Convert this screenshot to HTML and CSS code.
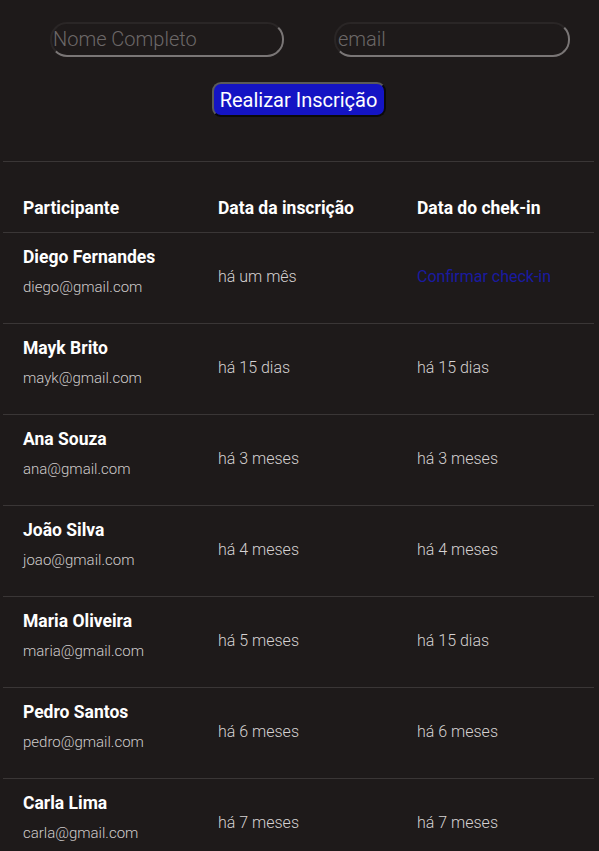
FILE: index.html
```html
<!DOCTYPE html>
<html lang="pt-BR">
<head>
<meta charset="utf-8">
<title>Inscrições</title>
<link rel="stylesheet" href="styles.css">
</head>
<body>
<main class="page">
  <form class="form">
    <div class="fields">
      <input class="field field-name" type="text" placeholder="Nome Completo">
      <input class="field field-email" type="email" placeholder="email">
    </div>
    <button class="submit" type="button">Realizar Inscrição</button>
  </form>
  <hr class="divider">
  <table class="table">
    <thead>
      <tr><th>Participante</th><th>Data da inscrição</th><th>Data do chek-in</th></tr>
    </thead>
    <tbody>
      <tr><td><strong>Diego Fernandes</strong><small>diego@gmail.com</small></td><td>há um mês</td><td><a class="checkin" href="#">Confirmar check-in</a></td></tr>
      <tr><td><strong>Mayk Brito</strong><small>mayk@gmail.com</small></td><td>há 15 dias</td><td>há 15 dias</td></tr>
      <tr><td><strong>Ana Souza</strong><small>ana@gmail.com</small></td><td>há 3 meses</td><td>há 3 meses</td></tr>
      <tr><td><strong>João Silva</strong><small>joao@gmail.com</small></td><td>há 4 meses</td><td>há 4 meses</td></tr>
      <tr><td><strong>Maria Oliveira</strong><small>maria@gmail.com</small></td><td>há 5 meses</td><td>há 15 dias</td></tr>
      <tr><td><strong>Pedro Santos</strong><small>pedro@gmail.com</small></td><td>há 6 meses</td><td>há 6 meses</td></tr>
      <tr><td><strong>Carla Lima</strong><small>carla@gmail.com</small></td><td>há 7 meses</td><td>há 7 meses</td></tr>
    </tbody>
  </table>
</main>
</body>
</html>
```
FILE: styles.css
```css
html, body {
  margin: 0;
  padding: 0;
  background: #1e1a1a;
  font-family: Roboto, "Noto Sans", sans-serif;
  color: #fff;
}
.page {
  padding: 0 5px 0 3px;
}
.form {
  display: flex;
  flex-direction: column;
  align-items: center;
  padding-top: 22px;
}
.fields {
  display: flex;
  gap: 50px;
  align-self: flex-start;
  margin-left: 47px;
}
.field {
  box-sizing: border-box;
  height: 35px;
  padding: 0 0 1px 1px;
  background: transparent;
  border: 2px solid #7a7676;
  border-top-color: #2a2626;
  border-left-color: #2a2626;
  border-radius: 17px;
  font-family: Roboto, sans-serif;
  font-weight: 300;
  font-size: 20px;
  color: #ddd;
  outline: none;
}
.field-name { width: 234px; }
.field-email { width: 236px; padding-left: 2px; }
.field::placeholder { color: #6c6868; }
.submit {
  margin-top: 25px;
  box-sizing: border-box;
  height: 35px;
  width: 174px;
  padding: 0;
  background: #1414c4;
  border: 2px solid #5a5a5a;
  border-right-color: #0a0a0a;
  border-bottom-color: #0a0a0a;
  border-radius: 9px;
  font-family: Roboto, sans-serif;
  font-size: 20px;
  color: #fff;
}
.divider {
  margin: 44px 0 0;
  border: 0;
  border-top: 1px solid #3a3636;
}
.table {
  width: 100%;
  margin-top: 19px;
  border-collapse: collapse;
  table-layout: fixed;
}
.table th, .table td {
  text-align: left;
  padding: 0 0 0 20px;
  border-bottom: 1px solid #3a3636;
  vertical-align: middle;
}
.table th {
  height: 49px;
  padding-top: 2px;
  font-size: 17.5px;
  font-weight: 700;
  color: #fff;
}
.table th:nth-child(1), .table td:nth-child(1) { width: 175px; }
.table th:nth-child(2), .table td:nth-child(2) { width: 179px; }
.table td {
  height: 86px;
  padding-bottom: 4px;
  font-size: 16px;
  font-weight: 300;
  color: #d6d2d2;
}
.table td:first-child {
  height: 82px;
  padding-bottom: 8px;
}
.table strong {
  display: block;
  font-weight: 700;
  font-size: 17.5px;
  color: #fff;
  margin-top: -5px;
}
.table small {
  display: block;
  font-size: 15px;
  font-weight: 300;
  color: #cfcbcb;
  margin-top: 11px;
}
.checkin {
  color: #1a1aa0;
  font-weight: 400;
  text-decoration: none;
}
```
